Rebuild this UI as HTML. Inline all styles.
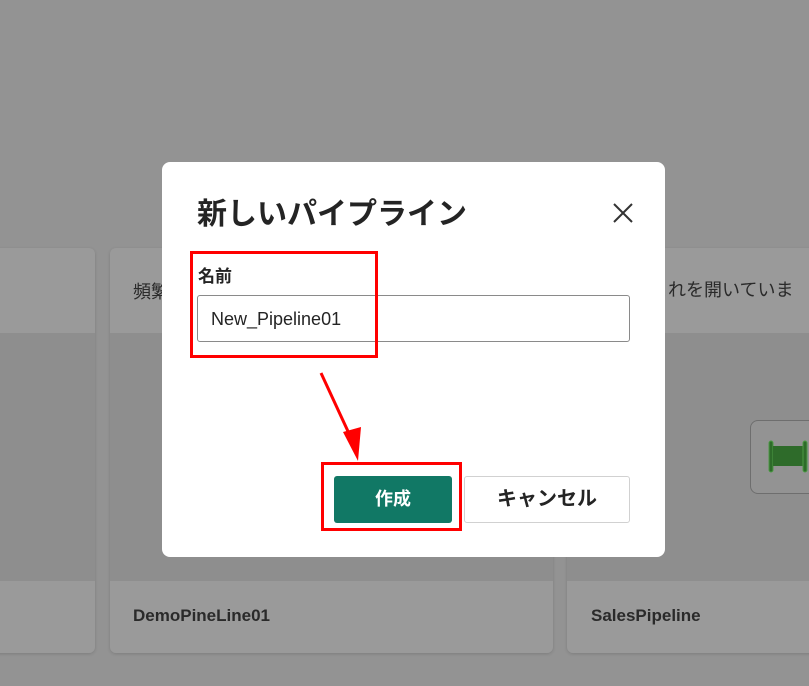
<!DOCTYPE html>
<html><head><meta charset="utf-8"><style>
*{margin:0;padding:0;box-sizing:border-box}
body{width:809px;height:686px;background:#939393;position:relative;overflow:hidden;font-family:"Liberation Sans","Noto Sans CJK JP",sans-serif}
.card{position:absolute;top:248px;height:405px;background:#8e8e8e;border-radius:6px;overflow:hidden;box-shadow:0 1px 3px rgba(0,0,0,.15)}
.card .h{position:absolute;left:0;right:0;top:0;height:85px;background:#9a9a9a}
.card .f{position:absolute;left:0;right:0;bottom:0;height:72px;background:#9a9a9a}
.card .t{position:absolute;font-size:18px;color:#2a2a2a}
.dlg{position:absolute;left:162px;top:162px;width:503px;height:395px;background:#fff;border-radius:8px}
.red{position:absolute;border:3px solid #f00}
</style></head><body>
<div class="card" style="left:-10px;width:105px"><div class="h"></div><div class="f"></div></div>
<div class="card" style="left:110px;width:443px"><div class="h"></div><div class="f"></div>
<div class="t" style="left:23px;top:30px">頻繁</div>
<div class="t" style="left:23px;top:358px;font-weight:bold;font-size:17px">DemoPineLine01</div></div>
<div class="card" style="left:567px;width:260px"><div class="h"></div><div class="f"></div>
<div class="t" style="left:83px;top:28px">これを開いていま</div>
<div style="position:absolute;left:183px;top:172px;width:80px;height:74px;border:1px solid #6e6e6e;border-radius:8px;background:#939393"></div>
<svg style="position:absolute;left:200px;top:191px" width="45" height="36"><rect x="2" y="2" width="4" height="31" rx="2" fill="#2e6b2a" stroke="#4c9a44" stroke-width="1"/><rect x="6" y="7" width="30" height="20" fill="#2e6b2a"/><rect x="36" y="2" width="4" height="31" rx="2" fill="#2e6b2a" stroke="#4c9a44" stroke-width="1"/></svg>
<div class="t" style="left:24px;top:358px;font-weight:bold;font-size:17px">SalesPipeline</div></div>

<div class="dlg">
<div style="position:absolute;left:35px;top:27px;font-size:30px;font-weight:bold;color:#242424">新しいパイプライン</div>
<svg style="position:absolute;left:450px;top:40px" width="22" height="22"><path d="M2 2L20 20M20 2L2 20" stroke="#333" stroke-width="2"/></svg>
<div style="position:absolute;left:36px;top:100px;font-size:17px;font-weight:bold;color:#242424">名前</div>
<div style="position:absolute;left:35px;top:133px;width:433px;height:47px;border:1px solid #8a8a8a;border-radius:3px;font-size:18px;color:#242424;padding:13px 0 0 13px">New_Pipeline01</div>
<div style="position:absolute;left:172px;top:314px;width:118px;height:47px;background:#117865;border-radius:3px;color:#fff;font-weight:bold;font-size:18px;text-align:center;line-height:47px">作成</div>
<div style="position:absolute;left:302px;top:314px;width:166px;height:47px;border:1px solid #d1d1d1;border-radius:3px;font-weight:bold;font-size:20px;color:#242424;text-align:center;line-height:45px">キャンセル</div>
</div>
<div class="red" style="left:190px;top:251px;width:188px;height:107px"></div>
<div class="red" style="left:321px;top:462px;width:141px;height:69px"></div>
<svg style="position:absolute;left:0;top:0" width="809" height="686"><path d="M321 373L352 440" stroke="#f00" stroke-width="3"/><path d="M343 432L358 461L361 427Z" fill="#f00"/></svg>
</body></html>
